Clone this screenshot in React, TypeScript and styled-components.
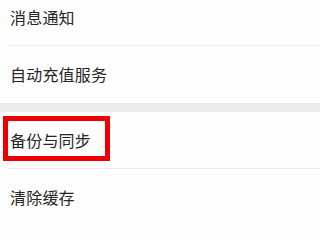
import React from "react";
import styled, { createGlobalStyle } from "styled-components";

const GlobalStyle = createGlobalStyle`
  html, body {
    margin: 0;
    padding: 0;
    background: #fdfdfd;
  }
  body {
    font-family: "Noto Sans CJK SC", "Noto Sans", sans-serif;
  }
`;

const Page = styled.div`
  width: 320px;
  height: 218px;
  overflow: hidden;
  background: #fdfdfd;
`;

const Group = styled.div<{ offset?: number }>`
  display: flex;
  flex-direction: column;
  margin-top: ${(p) => (p.offset ? `${p.offset}px` : "0")};
`;

const Row = styled.div`
  position: relative;
  display: flex;
  align-items: center;
  height: 56px;
  padding-left: 10px;
  font-size: 16px;
  color: #262626;
  letter-spacing: 0.2px;

  & + & {
    border-top: 1px solid transparent;
  }
  & + &::before {
    content: "";
    position: absolute;
    top: -1px;
    left: 8px;
    right: 0;
    height: 1px;
    background: #ececec;
  }
`;

const Gap = styled.div`
  height: 9px;
  margin-top: 1px;
  background: #ebebeb;
`;

const Highlight = styled.div`
  position: absolute;
  left: 3px;
  top: 4px;
  width: 107px;
  height: 45px;
  border: 5px solid #ee0000;
  box-sizing: border-box;
  pointer-events: none;
`;

const Label = styled.span`
  position: relative;
`;

const App: React.FC = () => {
  return (
    <>
      <GlobalStyle />
      <Page>
        <Group offset={-11}>
          <Row>
            <Label>消息通知</Label>
          </Row>
          <Row>
            <Label>自动充值服务</Label>
          </Row>
        </Group>
        <Gap />
        <Group>
          <Row>
            <Highlight />
            <Label>备份与同步</Label>
          </Row>
          <Row>
            <Label>清除缓存</Label>
          </Row>
        </Group>
      </Page>
    </>
  );
};

export default App;
